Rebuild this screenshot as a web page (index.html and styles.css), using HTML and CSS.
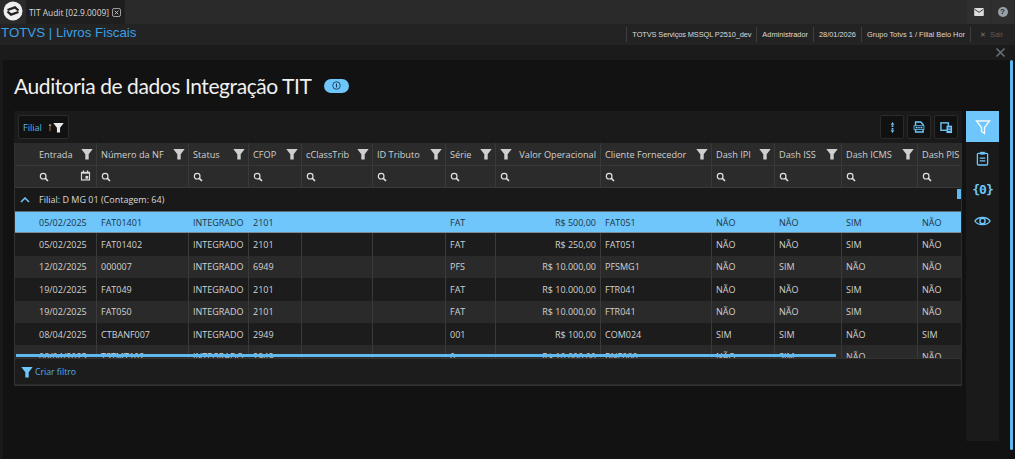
FILE: index.html
```html
<!DOCTYPE html>
<html lang="pt-BR">
<head>
<meta charset="utf-8">
<title>TIT Audit</title>
<link rel="stylesheet" href="styles.css">
</head>
<body>
<svg class="defs" width="0" height="0" aria-hidden="true">
  <symbol id="funnel" viewBox="0 0 12 12"><path d="M0.3 1h11.4L7.7 6.2V11.5H4.3V6.2z" fill="currentColor"/></symbol>
  <symbol id="search" viewBox="0 0 12 12"><circle cx="5" cy="5" r="3.4" fill="none" stroke="currentColor" stroke-width="1.4"/><path d="M7.4 7.4L10.8 10.8" stroke="currentColor" stroke-width="1.9"/></symbol>
</svg>
<header class="tabbar">
  <svg class="logo" viewBox="0 0 20 20"><circle cx="10" cy="10" r="9.5" fill="#eee"/><path d="M4.5 9L12 6.3 15.5 9.5M15.5 11L8 13.7 4.5 10.5" stroke="#222" stroke-width="2.3" fill="none"/></svg>
  <div class="tab">
    <span>TIT Audit [02.9.0009]</span>
    <svg class="tab-x" viewBox="0 0 10 10"><rect x="0.5" y="0.5" width="9" height="9" rx="2" fill="none" stroke="#bbb"/><path d="M3 3l4 4M7 3l-4 4" stroke="#ccc"/></svg>
  </div>
  <div class="tab-actions">
    <div class="tab-action"><svg viewBox="0 0 12 10" width="10" height="8"><rect width="12" height="10" rx="1" fill="#ddd"/><path d="M0.5 1.5L6 5.5 11.5 1.5" fill="none" stroke="#333" stroke-width="1.2"/></svg></div>
    <div class="tab-action"><span class="help">?</span></div>
  </div>
</header>
<div class="appbar">
  <div class="apptitle">TOTVS | Livros Fiscais</div>
  <div class="info">
    <span class="info-item info-conn">TOTVS Serviços MSSQL P2510_dev</span>
    <span class="info-item">Administrador</span>
    <span class="info-item">28/01/2026</span>
    <span class="info-item">Grupo Totvs 1 / Filial Belo Hor</span>
    <span class="info-exit"><b>✕</b> Sair</span>
  </div>
</div>
<div class="closebar">
  <svg width="9" height="9" viewBox="0 0 9 9"><path d="M0.5 0.5l8 8M8.5 0.5l-8 8" stroke="#6d7780" stroke-width="1.4"/></svg>
</div>
<main class="main">
  <div class="content">
    <div class="heading">
      <h1>Auditoria de dados Integração TIT</h1>
      <span class="pill"><svg width="9" height="9" viewBox="0 0 10 10"><circle cx="5" cy="5" r="4.2" fill="none" stroke="#14405f" stroke-width="1"/><path d="M5 2.8v4.4" stroke="#14405f" stroke-width="1.2"/></svg></span>
    </div>
    <div class="workspace">
      <section class="panel">
        <div class="toolbar">
          <div class="group-chip">
            <span class="chip-label">Filial</span>
            <span class="chip-arrow">↑</span>
            <svg class="chip-funnel"><use href="#funnel"/></svg>
          </div>
          <div class="tools">
            <button class="tool"><svg viewBox="0 0 12 14" width="11" height="13"><path d="M6 1L8 4H4zM6 13L4 10H8z" fill="#6ec6fb"/><rect x="5" y="4.6" width="2" height="1.8" fill="#6ec6fb"/><rect x="5" y="7.6" width="2" height="1.8" fill="#6ec6fb"/></svg></button>
            <button class="tool"><svg viewBox="0 0 14 14" width="12" height="12"><path d="M3 1.2h6L11.8 4v8.8H3z" fill="none" stroke="#6ec6fb" stroke-width="1.7"/><rect x="1.2" y="5.5" width="11.6" height="4.5" fill="#10222e" stroke="#6ec6fb" stroke-width="0.9"/><path d="M3.2 7.7h2M6.2 7.7h1.6M8.8 7.7h2" stroke="#8fd4ff" stroke-width="1.5"/></svg></button>
            <button class="tool"><svg viewBox="0 0 14 14" width="13" height="13"><rect x="1" y="2" width="8" height="8" fill="none" stroke="#6ec6fb" stroke-width="1.5"/><rect x="7" y="5" width="6" height="8" fill="#6ec6fb"/><path d="M8.5 7.5h3M8.5 10h3" stroke="#111"/></svg></button>
          </div>
        </div>
        <div class="grid">
          <div class="row head">
            <div class="cell first"><span>Entrada</span><svg class="f"><use href="#funnel"/></svg></div>
            <div class="cell"><span>Número da NF</span><svg class="f"><use href="#funnel"/></svg></div>
            <div class="cell"><span>Status</span><svg class="f"><use href="#funnel"/></svg></div>
            <div class="cell"><span>CFOP</span><svg class="f"><use href="#funnel"/></svg></div>
            <div class="cell"><span>cClassTrib</span><svg class="f"><use href="#funnel"/></svg></div>
            <div class="cell"><span>ID Tributo</span><svg class="f"><use href="#funnel"/></svg></div>
            <div class="cell"><span>Série</span><svg class="f"><use href="#funnel"/></svg></div>
            <div class="cell rev"><svg class="f"><use href="#funnel"/></svg><span>Valor Operacional</span></div>
            <div class="cell"><span>Cliente Fornecedor</span><svg class="f"><use href="#funnel"/></svg></div>
            <div class="cell"><span>Dash IPI</span><svg class="f"><use href="#funnel"/></svg></div>
            <div class="cell"><span>Dash ISS</span><svg class="f"><use href="#funnel"/></svg></div>
            <div class="cell"><span>Dash ICMS</span><svg class="f"><use href="#funnel"/></svg></div>
            <div class="cell"><span>Dash PIS</span></div>
          </div>
          <div class="row search">
            <div class="cell first"><svg class="s"><use href="#search"/></svg><svg class="cal" viewBox="0 0 12 12"><path d="M1 2h10v9.5H1z" fill="#ddd"/><rect x="2.2" y="4" width="7.6" height="6.2" fill="#333"/><rect x="6" y="6.5" width="3" height="3" fill="#ddd"/><rect x="3" y="0.5" width="1.5" height="2" fill="#ddd"/><rect x="7.5" y="0.5" width="1.5" height="2" fill="#ddd"/></svg></div>
            <div class="cell"><svg class="s"><use href="#search"/></svg></div>
            <div class="cell"><svg class="s"><use href="#search"/></svg></div>
            <div class="cell"><svg class="s"><use href="#search"/></svg></div>
            <div class="cell"><svg class="s"><use href="#search"/></svg></div>
            <div class="cell"><svg class="s"><use href="#search"/></svg></div>
            <div class="cell"><svg class="s"><use href="#search"/></svg></div>
            <div class="cell"><svg class="s"><use href="#search"/></svg></div>
            <div class="cell"><svg class="s"><use href="#search"/></svg></div>
            <div class="cell"><svg class="s"><use href="#search"/></svg></div>
            <div class="cell"><svg class="s"><use href="#search"/></svg></div>
            <div class="cell"><svg class="s"><use href="#search"/></svg></div>
            <div class="cell"><svg class="s"><use href="#search"/></svg></div>
          </div>
          <div class="body">
            <div class="grouprow">
              <svg width="10" height="6" viewBox="0 0 10 6"><path d="M1 5l4-4 4 4" fill="none" stroke="#6ec6fb" stroke-width="1.5"/></svg>
              <span>Filial: D MG 01 (Contagem: 64)</span>
            </div>
            <div class="row data selected">
              <div class="cell first">05/02/2025</div><div class="cell">FAT01401</div><div class="cell">INTEGRADO</div><div class="cell">2101</div><div class="cell"></div><div class="cell"></div><div class="cell">FAT</div><div class="cell num">R$ 500,00</div><div class="cell">FAT051</div><div class="cell">NÃO</div><div class="cell">NÃO</div><div class="cell">SIM</div><div class="cell">NÃO</div>
            </div>
            <div class="row data">
              <div class="cell first">05/02/2025</div><div class="cell">FAT01402</div><div class="cell">INTEGRADO</div><div class="cell">2101</div><div class="cell"></div><div class="cell"></div><div class="cell">FAT</div><div class="cell num">R$ 250,00</div><div class="cell">FAT051</div><div class="cell">NÃO</div><div class="cell">NÃO</div><div class="cell">SIM</div><div class="cell">NÃO</div>
            </div>
            <div class="row data alt">
              <div class="cell first">12/02/2025</div><div class="cell">000007</div><div class="cell">INTEGRADO</div><div class="cell">6949</div><div class="cell"></div><div class="cell"></div><div class="cell">PFS</div><div class="cell num">R$ 10.000,00</div><div class="cell">PFSMG1</div><div class="cell">NÃO</div><div class="cell">SIM</div><div class="cell">NÃO</div><div class="cell">NÃO</div>
            </div>
            <div class="row data">
              <div class="cell first">19/02/2025</div><div class="cell">FAT049</div><div class="cell">INTEGRADO</div><div class="cell">2101</div><div class="cell"></div><div class="cell"></div><div class="cell">FAT</div><div class="cell num">R$ 10.000,00</div><div class="cell">FTR041</div><div class="cell">NÃO</div><div class="cell">NÃO</div><div class="cell">SIM</div><div class="cell">NÃO</div>
            </div>
            <div class="row data alt">
              <div class="cell first">19/02/2025</div><div class="cell">FAT050</div><div class="cell">INTEGRADO</div><div class="cell">2101</div><div class="cell"></div><div class="cell"></div><div class="cell">FAT</div><div class="cell num">R$ 10.000,00</div><div class="cell">FTR041</div><div class="cell">NÃO</div><div class="cell">NÃO</div><div class="cell">SIM</div><div class="cell">NÃO</div>
            </div>
            <div class="row data">
              <div class="cell first">08/04/2025</div><div class="cell">CTBANF007</div><div class="cell">INTEGRADO</div><div class="cell">2949</div><div class="cell"></div><div class="cell"></div><div class="cell">001</div><div class="cell num">R$ 100,00</div><div class="cell">COM024</div><div class="cell">SIM</div><div class="cell">SIM</div><div class="cell">NÃO</div><div class="cell">SIM</div>
            </div>
            <div class="row data alt">
              <div class="cell first">08/04/2025</div><div class="cell">TSTMT102</div><div class="cell">INTEGRADO</div><div class="cell">2949</div><div class="cell"></div><div class="cell"></div><div class="cell">0</div><div class="cell num">R$ 10.000,00</div><div class="cell">BNF080</div><div class="cell">NÃO</div><div class="cell">SIM</div><div class="cell">NÃO</div><div class="cell">NÃO</div>
            </div>
            <div class="hscroll"></div>
            <div class="vscroll"></div>
          </div>
          <div class="gridfoot">
            <svg class="foot-funnel"><use href="#funnel"/></svg>
            <span>Criar filtro</span>
          </div>
        </div>
      </section>
      <nav class="side">
        <div class="side-btn active"><svg viewBox="0 0 16 16" width="16" height="16"><path d="M1.5 2h13L9.5 8.5V14.5L6.5 12.5V8.5z" fill="none" stroke="#f2f8fc" stroke-width="1.4"/></svg></div>
        <div class="side-btn"><svg viewBox="0 0 14 16" width="13" height="15"><rect x="1.5" y="2.5" width="11" height="12.5" rx="1" fill="none" stroke="#6ec6fb" stroke-width="1.4"/><rect x="4.5" y="0.8" width="5" height="3" fill="#6ec6fb"/><path d="M4 7.5h6M4 10.5h6" stroke="#6ec6fb" stroke-width="1.3"/></svg></div>
        <div class="side-btn code">{0}</div>
        <div class="side-btn"><svg viewBox="0 0 18 12" width="17" height="12"><path d="M1 6C4 1 14 1 17 6 14 11 4 11 1 6z" fill="none" stroke="#6ec6fb" stroke-width="1.5"/><circle cx="9" cy="6" r="2.8" fill="none" stroke="#6ec6fb" stroke-width="1.5"/></svg></div>
      </nav>
    </div>
  </div>
  <div class="pagescroll"></div>
</main>
</body>
</html>
```
FILE: styles.css
```css
* { box-sizing: border-box; }
html, body { margin: 0; height: 100%; }
body {
  width: 1015px;
  height: 459px;
  overflow: hidden;
  background: #121212;
  font-family: "Open Sans", "Noto Sans", sans-serif;
  color: #d4d4d4;
  display: flex;
  flex-direction: column;
}
.defs { position: absolute; }
.tabbar {
  height: 24px;
  flex: none;
  display: flex;
  align-items: stretch;
  background: #2a2a2a;
}
.logo { width: 20px; height: 20px; margin: 1px 3px 3px 3px; }
.tab {
  width: 99px;
  background: #1e1e1e;
  display: flex;
  align-items: center;
  gap: 3px;
  padding-left: 3px;
  font-size: 8.4px;
  color: #d8d8d8;
  white-space: nowrap;
}
.tab-x { width: 9px; height: 9px; }
.tab-actions { margin-left: auto; display: flex; gap: 1px; padding-right: 1px; }
.tab-action {
  width: 23px;
  display: flex;
  align-items: center;
  justify-content: center;
  background: #2f2f2f;
}
.help {
  width: 10px;
  height: 10px;
  border-radius: 50%;
  background: #9aa0a4;
  color: #2a2a2a;
  font: bold 8px/10px "Liberation Sans", sans-serif;
  text-align: center;
}
.appbar {
  height: 21px;
  flex: none;
  display: flex;
  justify-content: space-between;
  background: #232323;
  padding-left: 1px;
}
.apptitle {
  font: 13.3px/17px "Liberation Sans", sans-serif;
  color: #3d9fe6;
}
.info {
  display: flex;
  align-items: center;
  font: 7.4px "Liberation Sans", sans-serif;
  color: #dcdcdc;
}
.info-item {
  height: 15px;
  line-height: 15px;
  padding: 0 5px;
  border-left: 1px solid #3e3e3e;
  white-space: nowrap;
}
.info-conn { letter-spacing: -0.1px; }
.info-exit {
  height: 15px;
  line-height: 15px;
  border-left: 1px solid #3e3e3e;
  padding: 0 0 0 9px;
  width: 45px;
  color: #5c5c5c;
  white-space: nowrap;
}
.info-exit b { font-weight: normal; color: #7a7a7a; margin-right: 2px; }
.closebar {
  height: 15px;
  flex: none;
  background: #1b1b1b;
  display: flex;
  align-items: center;
  justify-content: flex-end;
  padding-right: 10px;
}
.main {
  flex: 1;
  min-height: 0;
  display: flex;
  background: #121212;
  border-left: 3px solid #191919;
}
.content { flex: 1; min-width: 0; padding: 0 0 0 11px; }
.heading {
  height: 51px;
  display: flex;
  align-items: center;
  gap: 12px;
}
h1 {
  margin: 0 0 1px;
  font: 400 21px "Lato", sans-serif;
  letter-spacing: -0.42px;
  color: #f0f0f0;
  white-space: nowrap;
}
.pill {
  width: 25px;
  height: 14px;
  border-radius: 7px;
  background: #6ec6fb;
  display: flex;
  align-items: center;
  justify-content: center;
}
.workspace { display: flex; gap: 4px; align-items: flex-start; }
.panel { width: 948px; flex: none; background: #1a1a1a; }
.toolbar {
  height: 32px;
  display: flex;
  align-items: center;
  justify-content: space-between;
  padding: 0 4px;
}
.group-chip {
  height: 24px;
  width: 51px;
  display: flex;
  align-items: center;
  background: #111;
  border: 1px solid #2c2c2c;
  border-radius: 2px;
  padding-left: 4px;
}
.chip-label { font-size: 9px; color: #5db4ec; }
.chip-arrow { font-size: 12px; line-height: 12px; color: #ccc; margin-left: 5px; }
.chip-funnel { width: 11px; height: 11px; color: #e8e8e8; }
.tools { display: flex; gap: 3px; }
.tool {
  width: 24px;
  height: 24px;
  padding: 0;
  background: #111;
  border: 1px solid #2a2a2a;
  border-radius: 2px;
  display: flex;
  align-items: center;
  justify-content: center;
}
.grid { border: 1px solid #323232; border-top: 0; border-right-color: #2e2e2e; }
.row {
  display: grid;
  grid-template-columns: 81px 92px 60px 53px 71px 73px 50px 105px 111px 63px 67px 76px 44px;
}
.cell {
  min-width: 0;
  padding-left: 4px;
  display: flex;
  align-items: center;
  overflow: hidden;
  white-space: nowrap;
}
.cell + .cell { border-left: 1px solid #3a3a3a; }
.cell.first { padding-left: 24px; }
.head {
  height: 22px;
  background: #2b2b2b;
  font-size: 9.2px;
  color: #d0d0d0;
}
.head .cell { justify-content: space-between; padding-right: 3px; }
.head .rev { padding-right: 4px; }
.f { width: 12px; height: 12px; flex: none; color: #cfcfcf; }
.search {
  height: 23px;
  background: #2b2b2b;
  border-top: 1px solid #383838;
  border-bottom: 1px solid #3a3a3a;
}
.search .cell.first { justify-content: space-between; padding-right: 5px; }
.s { width: 10px; height: 10px; color: #e2e2e2; flex: none; }
.cal { width: 11px; height: 11px; flex: none; margin-top: -2px; }
.body { position: relative; height: 170px; overflow: hidden; }
.grouprow {
  height: 23px;
  display: flex;
  align-items: center;
  gap: 9px;
  padding-left: 5px;
  font-size: 9px;
  color: #d8d8d8;
  background: #191919;
}
.data {
  height: 22.4px;
  font-size: 9px;
  background: #1c1c1c;
  color: #d2d2d2;
}
.data.alt { background: #2a2a2a; }
.data.selected {
  background: #6ec6fb;
  color: #1f3342;
  border-top: 1px solid #5a6b76;
  border-bottom: 1px solid #7a8a94;
}
.selected .cell + .cell { border-left-color: transparent; }
.cell.num { justify-content: flex-end; padding-right: 4px; }
.hscroll {
  position: absolute;
  left: 1px;
  top: 166px;
  width: 820px;
  height: 3px;
  background: #5fb8ee;
}
.vscroll {
  position: absolute;
  right: 0;
  top: 1px;
  width: 4px;
  height: 10px;
  background: #5fb8ee;
}
.gridfoot {
  height: 27px;
  display: flex;
  align-items: center;
  gap: 2px;
  padding: 1px 0 0 6px;
  font-size: 8.7px;
  color: #58afe8;
  background: #1c1c1c;
  border-top: 1px solid #323232;
  border-bottom: 1px solid #2a2a2a;
}
.foot-funnel { width: 12px; height: 12px; color: #6ec6fb; }
.side {
  width: 33px;
  height: 330px;
  flex: none;
  background: #1a1a1a;
  display: flex;
  flex-direction: column;
}
.side-btn {
  height: 31px;
  display: flex;
  align-items: center;
  justify-content: center;
}
.side-btn.active { background: #6ec6fb; margin-bottom: 1px; }
.side-btn.code {
  font: bold 13px "DejaVu Sans Mono", monospace;
  color: #6ec6fb;
  letter-spacing: -1px;
}
.pagescroll {
  width: 3px;
  height: 390px;
  margin: 0 2px 0 0;
  background: #5fb8ee;
  border-radius: 2px;
  flex: none;
}
```
